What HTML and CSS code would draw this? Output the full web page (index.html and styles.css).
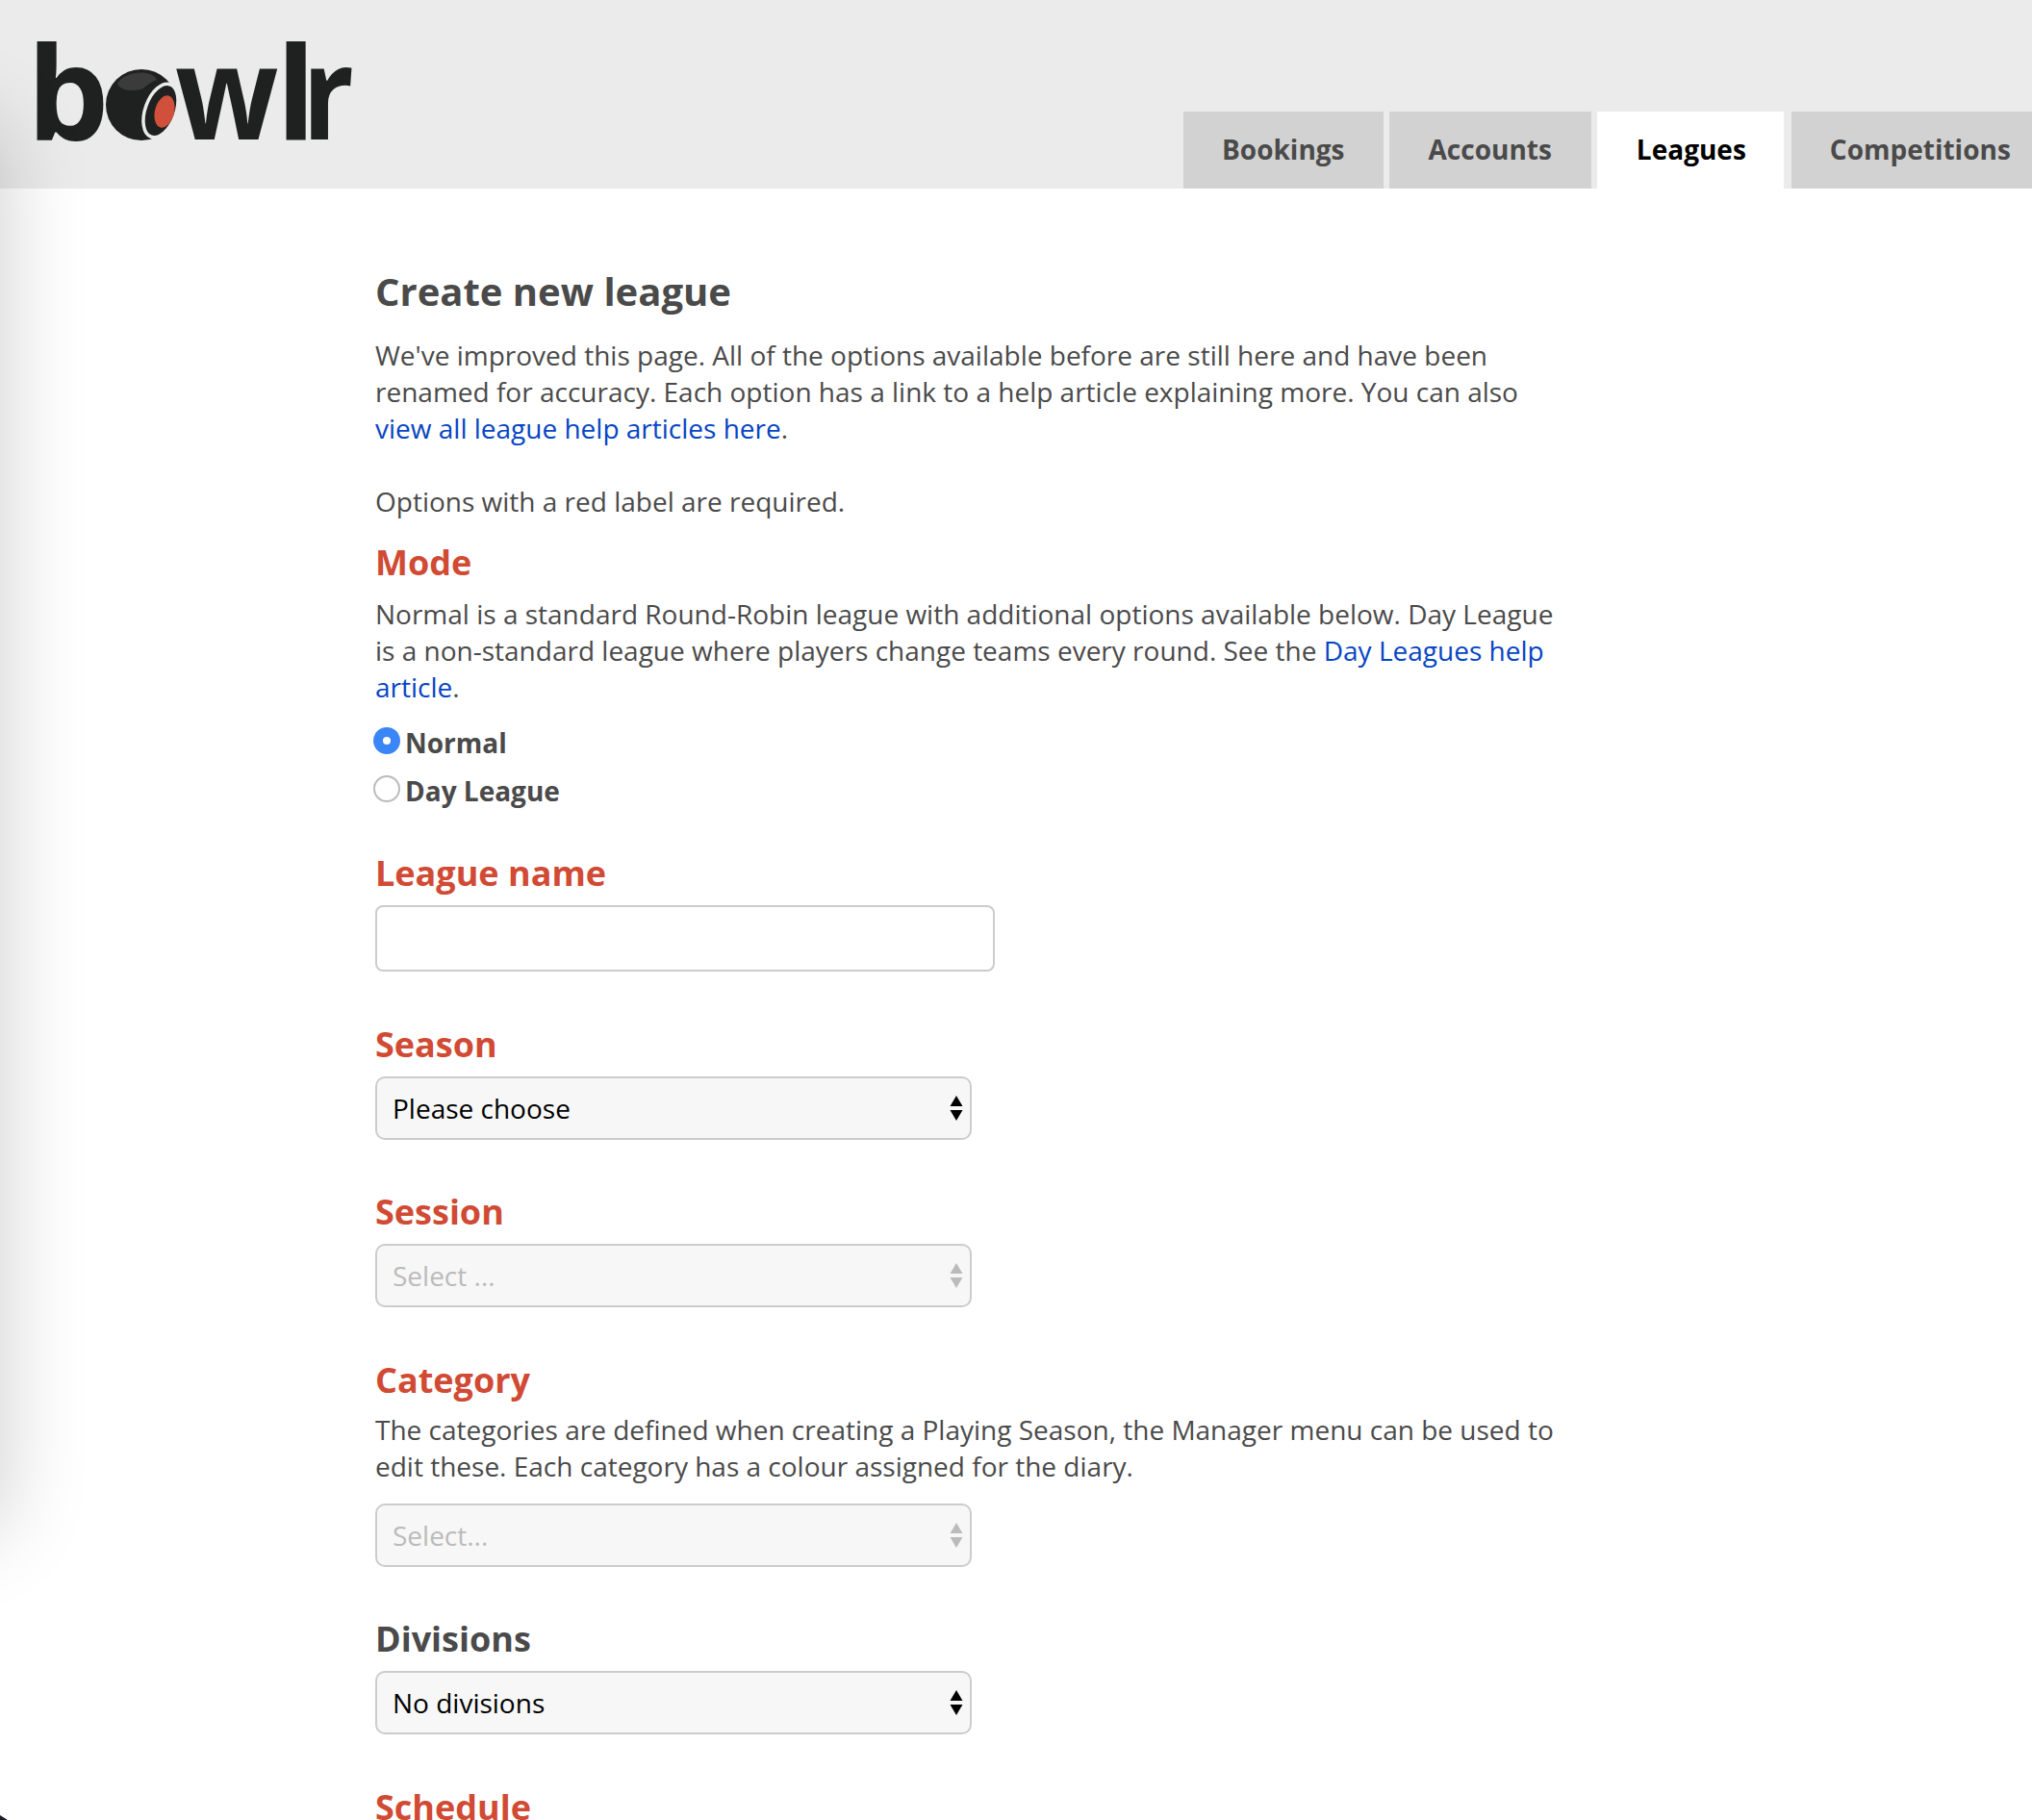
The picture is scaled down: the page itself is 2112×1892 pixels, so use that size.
FILE: index.html
```html
<!DOCTYPE html>
<html lang="en">
<head>
  <meta charset="UTF-8">
  <title>Create new league - bowlr</title>
  <link rel="stylesheet" href="styles.css">
</head>
<body>

  <!-- Soft shadow down the left edge -->
  <div class="edge-shadow"></div>
  <div class="window-corner"></div>

  <!-- Header with logo and tabs -->
  <header class="site-header">
    <a class="logo" href="#" aria-label="bowlr">
      <svg width="360" height="196" viewBox="20 0 360 196">
        <g class="logo-letters">
          <text x="28" y="145">b</text>
          <text transform="translate(182 145) scale(.93 1)">w</text>
          <text x="287" y="145">l</text>
          <text transform="translate(314 145) scale(.88 1)">r</text>
        </g>
        <circle cx="147" cy="109" r="37" fill="#1f2120"/>
        <path d="M122 87c4-8 18-13 30-11 6 1 10 4 11 7-6 2-11 6-14 9-12 4-24 2-27-5z" fill="#3a3b3a"/>
        <ellipse cx="167" cy="115" rx="16" ry="29" fill="#1f2120" stroke="#ebebeb" stroke-width="3.500" transform="rotate(20 167 115)"/>
        <ellipse cx="171" cy="116" rx="10" ry="17" fill="#d0503b" transform="rotate(14 171 116)"/>
      </svg>
    </a>
    <nav class="tabs">
      <a class="tab" href="#">Bookings</a>
      <a class="tab tab-wide" href="#">Accounts</a>
      <a class="tab tab-active" href="#">Leagues</a>
      <a class="tab tab-last" href="#">Competitions</a>
    </nav>
  </header>

  <!-- League form -->
  <main class="content">
    <h1 class="page-title">Create new league</h1>
    <p class="intro">We've improved this page. All of the options available before are still here and have been renamed for accuracy. Each option has a link to a help article explaining more. You can also <a href="#">view all league help articles here</a>.</p>
    <p class="required-note">Options with a red label are required.</p>

    <form>
      <section class="field field-mode">
        <h2 class="label required">Mode</h2>
        <p class="help">Normal is a standard Round-Robin league with additional options available below. Day League is a non-standard league where players change teams every round. See the <a href="#">Day Leagues help article</a>.</p>
        <label class="radio"><input type="radio" name="mode" checked> Normal</label>
        <label class="radio"><input type="radio" name="mode"> Day League</label>
      </section>

      <section class="field field-name">
        <label class="label required" for="league-name">League name</label>
        <input class="text-input" id="league-name" type="text">
      </section>

      <section class="field field-season">
        <label class="label required" for="season">Season</label>
        <div class="select-wrap">
          <select id="season"><option>Please choose</option></select>
          <svg class="select-arrows" width="14" height="26" viewBox="0 0 14 26"><path d="M7 0L13.500 11H.5zM7 26L.5 15h13z"/></svg>
        </div>
      </section>

      <section class="field field-session">
        <label class="label required" for="session">Session</label>
        <div class="select-wrap is-disabled">
          <select id="session" disabled><option>Select ...</option></select>
          <svg class="select-arrows" width="14" height="26" viewBox="0 0 14 26"><path d="M7 0L13.500 11H.5zM7 26L.5 15h13z"/></svg>
        </div>
      </section>

      <section class="field field-category">
        <label class="label required" for="category">Category</label>
        <p class="help">The categories are defined when creating a Playing Season, the Manager menu can be used to edit these. Each category has a colour assigned for the diary.</p>
        <div class="select-wrap is-disabled">
          <select id="category" disabled><option>Select...</option></select>
          <svg class="select-arrows" width="14" height="26" viewBox="0 0 14 26"><path d="M7 0L13.500 11H.5zM7 26L.5 15h13z"/></svg>
        </div>
      </section>

      <section class="field field-divisions">
        <label class="label" for="divisions">Divisions</label>
        <div class="select-wrap">
          <select id="divisions"><option>No divisions</option></select>
          <svg class="select-arrows" width="14" height="26" viewBox="0 0 14 26"><path d="M7 0L13.500 11H.5zM7 26L.5 15h13z"/></svg>
        </div>
      </section>

      <section class="field field-schedule">
        <label class="label required">Schedule</label>
      </section>
    </form>
  </main>

</body>
</html>
```

FILE: styles.css
```css
html,
body {
  background-color: #fff;
  color: #4a4a4a;
  font-family: "Open Sans", sans-serif;
  font-size: 28px;
  height: 1892px;
  line-height: 38px;
  margin: 0;
  overflow: hidden;
}

a {
  color: #0645c4;
  text-decoration: none;
}

.edge-shadow {
  box-shadow: 0 0 85px 0 rgba(0, 0, 0, 0.2);
  height: 1460px;
  left: -300px;
  position: absolute;
  top: 130px;
  width: 300px;
  z-index: 2;
}

.window-corner {
  border-left: 8px solid #1c1c28;
  border-top: 5px solid transparent;
  bottom: 0;
  left: 0;
  position: absolute;
  z-index: 2;
}

/* Header */
.site-header {
  background-color: #ebebeb;
  display: flex;
  height: 196px;
}

.logo {
  flex: none;
  height: 196px;
  margin-left: 20px;
  width: 360px;
}

.logo svg {
  display: block;
}

.logo-letters {
  fill: #1f2120;
  font-family: "Open Sans", sans-serif;
  font-size: 135px;
  font-weight: 700;
}

.tabs {
  align-items: flex-end;
  display: flex;
  flex: none;
  gap: 6px;
  margin-left: 850px;
}

.tab {
  background-color: #d2d2d2;
  color: #4a4a4a;
  display: block;
  font-weight: 700;
  height: 80px;
  line-height: 78px;
  padding: 0 40px;
}

.tab-wide {
  padding: 0 41px;
}

.tab-active {
  background-color: #fff;
  color: #000;
  padding: 0 39px 0 41px;
}

.tab-last {
  margin-left: 2px;
}

/* Main column */
.content {
  margin-left: 390px;
  padding-top: 82px;
  width: 1240px;
}

.page-title {
  font-size: 40px;
  font-weight: 700;
  line-height: 50px;
  margin: 0 0 22px;
}

.intro {
  margin: 0 0 38px;
}

.required-note {
  margin: 0 0 22px;
}

.label {
  display: block;
  font-size: 36px;
  font-weight: 700;
  line-height: 46px;
  margin: 0;
}

.required {
  color: #d14a34;
}

.help {
  margin: 11px 0 0;
}

.radio {
  align-items: center;
  display: flex;
  font-weight: 700;
  height: 50px;
}

.field-mode .help {
  margin-bottom: 14px;
}

.radio input {
  appearance: none;
  background-color: #fff;
  border: 2px solid #bbb;
  border-radius: 50%;
  box-sizing: border-box;
  height: 28px;
  margin: -4px 5px 0 -2px;
  width: 28px;
}

.radio input:checked {
  background-color: #fff;
  border: 10px solid #3b86f7;
}

.text-input {
  background-color: #fff;
  border: 2px solid #ccc;
  border-radius: 8px;
  box-sizing: border-box;
  display: block;
  height: 69px;
  margin-top: 10px;
  width: 644px;
}

.select-wrap {
  margin-top: 10px;
  position: relative;
  width: 620px;
}

.select-wrap select {
  appearance: none;
  background-color: #f7f7f7;
  border: 2px solid #ccc;
  border-radius: 10px;
  box-sizing: border-box;
  color: #000;
  display: block;
  font-family: "Open Sans", sans-serif;
  font-size: 28px;
  height: 66px;
  opacity: 1;
  padding: 0 16px;
  width: 100%;
}

.select-arrows {
  fill: #000;
  position: absolute;
  right: 9px;
  top: 20px;
}

.is-disabled select {
  color: #bbb;
}

.is-disabled .select-arrows {
  fill: #bbb;
}

.field-name {
  margin-top: 38px;
}

.field-season {
  margin-top: 53px;
}

.field-session {
  margin-top: 52px;
}

.field-category {
  margin-top: 53px;
}

.field-category .help {
  margin: 9px 0 0;
}

.field-category .select-wrap {
  margin-top: 20px;
}

.field-divisions {
  margin-top: 52px;
}

.field-schedule {
  margin-top: 53px;
}
```
